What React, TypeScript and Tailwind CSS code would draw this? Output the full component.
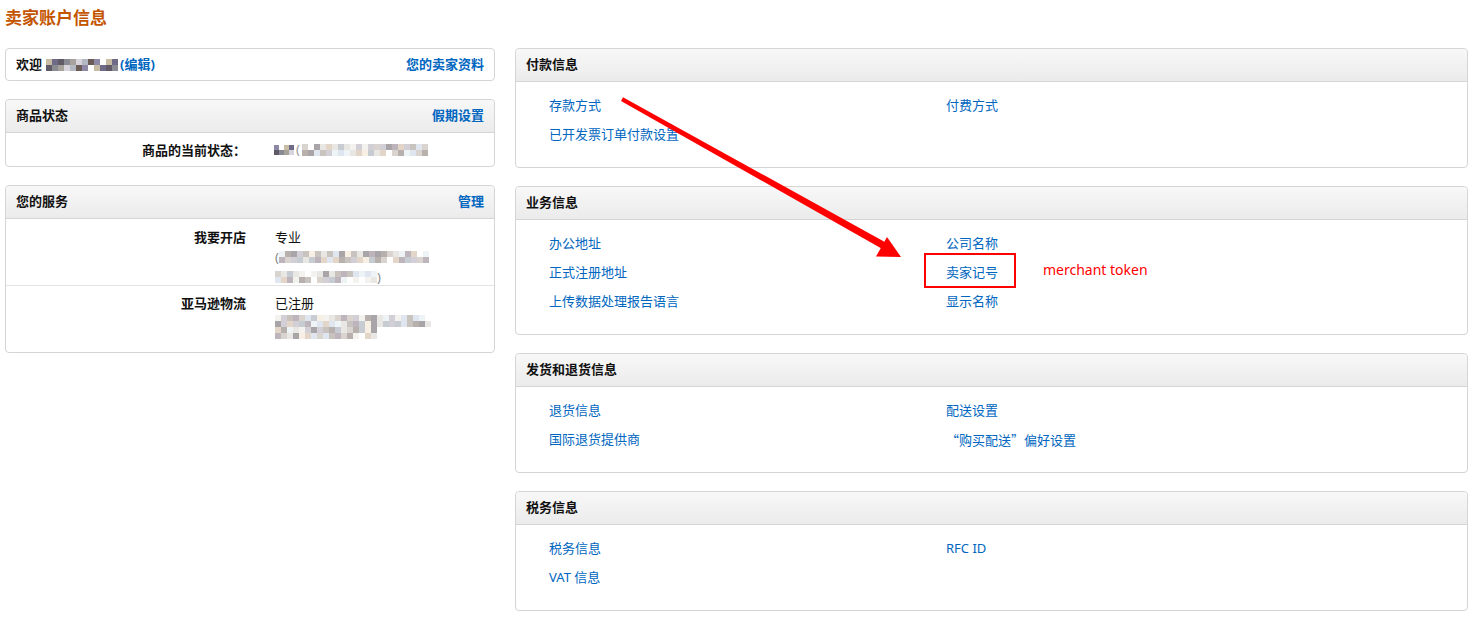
import React from 'react';

const PALETTE = [
  '#c9c3c0', '#b8b0ad', '#d9d4cf', '#e9e7e4', '#f4f2ef', '#ffffff', '#c7ccd2',
  '#dfe6ef', '#e3d6c8', '#bdb5bb', '#a9a4a8', '#d3cfd6', '#eef3f6', '#f7efe4',
];

// cheap deterministic mosaic for blurred-out personal data
const Mosaic: React.FC<{ cols: number; rows?: number; seed: number; cell?: number; dark?: boolean }> = ({
  cols,
  rows = 2,
  seed,
  cell = 6,
  dark,
}) => {
  const cells: string[] = [];
  let s = seed;
  for (let i = 0; i < cols * rows; i++) {
    s = (s * 9301 + 49297) % 233280;
    const pal = dark
      ? ['#8d88a6', '#6f6a86', '#a7a39c', '#6b5c58', '#c9bca5', '#8a8a93', '#b4b8c2', '#ffffff', '#5f5a66', '#d8d4dc']
      : PALETTE;
    cells.push(pal[s % pal.length]);
  }
  return (
    <span className="inline-grid align-middle" style={{ gridTemplateColumns: `repeat(${cols}, ${cell}px)` }}>
      {cells.map((c, i) => (
        <span key={i} style={{ background: c, width: cell, height: cell }} />
      ))}
    </span>
  );
};

const CardHeader: React.FC<{ title: string; action?: string }> = ({ title, action }) => (
  <div className="flex h-[33px] items-center justify-between rounded-t-[4px] border-b border-[#d5d5d5] bg-gradient-to-b from-[#f8f8f8] to-[#ebebeb] px-[10px]">
    <span className="text-[13px] font-bold text-[#111]">{title}</span>
    {action && <a className="text-[13px] font-bold text-[#0066c0]">{action}</a>}
  </div>
);

const LinkCard: React.FC<{ title: string; rows: [string, string?][] }> = ({ title, rows }) => (
  <div className="rounded-[4px] border border-[#d5d5d5] bg-white">
    <CardHeader title={title} />
    <div className="grid grid-cols-[397px_1fr] pt-[9px] pb-[18px] pl-[33px]">
      {rows.map(([a, b], i) => (
        <React.Fragment key={i}>
          <a className="h-[29px] text-[13px] leading-[29px] text-[#0066c0]">{a}</a>
          <a className="h-[29px] text-[13px] leading-[29px] text-[#0066c0]">{b ?? ''}</a>
        </React.Fragment>
      ))}
    </div>
  </div>
);

export default function App() {
  return (
    <div className="relative min-h-[619px] w-[1475px] bg-white pl-[5px] pt-[7px] font-['Noto_Sans','Noto_Sans_CJK_SC',sans-serif] text-[#111]">
      <h1 className="h-[21px] text-[17px] font-bold leading-[21px] text-[#c45500]">卖家账户信息</h1>

      <div className="mt-[20px] flex gap-[20px]">
        {/* left column */}
        <div className="flex w-[490px] flex-col gap-[18px]">
          <div className="flex h-[33px] items-center justify-between rounded-[4px] border border-[#d5d5d5] px-[10px]">
            <span className="flex items-center text-[13px] font-bold">
              欢迎
              <span className="ml-[4px] mr-[2px] flex">
                <Mosaic cols={12} rows={2} seed={7} cell={6} dark />
              </span>
              <a className="text-[#0066c0]">(编辑)</a>
            </span>
            <a className="text-[13px] font-bold text-[#0066c0]">您的卖家资料</a>
          </div>

          <div className="rounded-[4px] border border-[#d5d5d5]">
            <CardHeader title="商品状态" action="假期设置" />
            <div className="grid h-[33px] grid-cols-[240px_1fr] items-center">
              <span className="text-right font-['Noto_Sans_CJK_SC',sans-serif] text-[13px] font-bold">商品的当前状态：</span>
              <span className="flex items-center gap-[2px] pl-[28px] text-[13px]">
                <Mosaic cols={4} rows={2} seed={3} cell={5} dark />
                <span className="text-[#999]">(</span>
                <Mosaic cols={21} rows={2} seed={11} cell={6} />
              </span>
            </div>
          </div>

          <div className="rounded-[4px] border border-[#d5d5d5]">
            <CardHeader title="您的服务" action="管理" />
            <div className="grid h-[67px] grid-cols-[240px_1fr] border-b border-[#e3e3e3] pt-[9px]">
              <span className="text-right text-[13px] font-bold leading-[18px]">我要开店</span>
              <div className="flex flex-col pl-[29px] text-[13px] leading-[18px]">
                <span>专业</span>
                <span className="mt-[2px] flex items-center text-[#888]">
                  (<Mosaic cols={25} rows={2} seed={21} />
                </span>
                <span className="mt-[2px] flex items-center text-[#888]">
                  <Mosaic cols={17} rows={2} seed={33} />)
                </span>
              </div>
            </div>
            <div className="grid h-[66px] grid-cols-[240px_1fr] pt-[8px]">
              <span className="text-right text-[13px] font-bold leading-[18px]">亚马逊物流</span>
              <div className="flex flex-col pl-[29px] text-[13px] leading-[18px]">
                <span>已注册</span>
                <span className="mt-[3px] flex">
                  <Mosaic cols={26} rows={2} seed={47} />
                </span>
                <span className="flex">
                  <Mosaic cols={17} rows={2} seed={59} />
                </span>
              </div>
            </div>
          </div>
        </div>

        {/* right column */}
        <div className="flex w-[953px] flex-col gap-[18px]">
          <LinkCard title="付款信息" rows={[['存款方式', '付费方式'], ['已开发票订单付款设置']]} />
          <LinkCard
            title="业务信息"
            rows={[
              ['办公地址', '公司名称'],
              ['正式注册地址', '卖家记号'],
              ['上传数据处理报告语言', '显示名称'],
            ]}
          />
          <div className="rounded-[4px] border border-[#d5d5d5] bg-white">
            <CardHeader title="发货和退货信息" />
            <div className="grid grid-cols-[397px_1fr] pt-[9px] pb-[18px] pl-[33px]">
              <a className="h-[29px] text-[13px] leading-[29px] text-[#0066c0]">退货信息</a>
              <a className="h-[29px] text-[13px] leading-[29px] text-[#0066c0]">配送设置</a>
              <a className="h-[29px] text-[13px] leading-[29px] text-[#0066c0]">国际退货提供商</a>
              <a className="h-[29px] font-['Noto_Sans_CJK_SC',sans-serif] text-[13px] leading-[29px] text-[#0066c0]">
                “购买配送”偏好设置
              </a>
            </div>
          </div>
          <LinkCard
            title="税务信息"
            rows={[
              ['税务信息', 'RFC ID'],
              ['VAT 信息'],
            ]}
          />
        </div>
      </div>

      {/* annotation overlay */}
      <div className="pointer-events-none absolute left-[924px] top-[253px] h-[35px] w-[92px] border-2 border-[#ff0000]" />
      <span className="pointer-events-none absolute left-[1043px] top-[260px] text-[14px] leading-[20px] text-[#ff0000]">
        merchant token
      </span>
      <svg className="pointer-events-none absolute left-0 top-0" width="1475" height="619" viewBox="0 0 1475 619">
        <polygon points="621,101 623,97.3 886.2,242.7 882.8,249.2" fill="#ff0000" />
        <polygon points="901,257 876,256.5 887,237" fill="#ff0000" />
      </svg>
    </div>
  );
}
